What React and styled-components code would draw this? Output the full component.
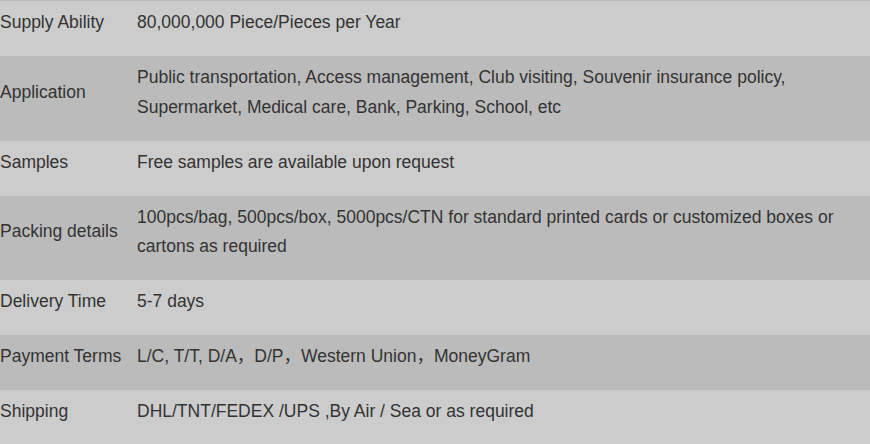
import styled, { createGlobalStyle } from 'styled-components';

const specs = [
  { label: 'Supply Ability', value: '80,000,000 Piece/Pieces per Year' },
  {
    label: 'Application',
    value:
      'Public transportation, Access management, Club visiting, Souvenir insurance policy, Supermarket, Medical care, Bank, Parking, School, etc',
  },
  { label: 'Samples', value: 'Free samples are available upon request' },
  {
    label: 'Packing details',
    value:
      '100pcs/bag, 500pcs/box, 5000pcs/CTN for standard printed cards or customized boxes or cartons as required',
  },
  { label: 'Delivery Time', value: '5-7 days' },
  { label: 'Payment Terms', value: 'L/C, T/T, D/A，D/P，Western Union，MoneyGram' },
  { label: 'Shipping', value: 'DHL/TNT/FEDEX /UPS ,By Air / Sea or as required' },
];

const App = () => {
  return (
    <>
      <GlobalStyle />
      <Table>
        <tbody>
          {specs.map((spec, i) => (
            <Row key={spec.label} $dark={i % 2 === 1}>
              <Label>{spec.label}</Label>
              <Value>{spec.value}</Value>
            </Row>
          ))}
        </tbody>
      </Table>
    </>
  );
};

export default App;

const GlobalStyle = createGlobalStyle`
  body {
    margin: 0;
    background: #cccccc;
  }
`;

const Table = styled.table`
  width: 870px;
  border-collapse: separate;
  border-spacing: 0;
  border-top: 1px solid #bbbbbb;
  font-family: "Liberation Sans", Arial, "Noto Sans CJK SC", sans-serif;
  font-size: 17.5px;
  line-height: 29.5px;
  color: #333333;
`;

const Row = styled.tr`
  background: ${(p) => (p.$dark ? '#bbbbbb' : '#cccccc')};
`;

const Label = styled.td`
  width: 137px;
  padding: 7px 0 18.5px 0;
  vertical-align: middle;
  white-space: nowrap;
`;

const Value = styled.td`
  padding: 7px 0 18.5px 0;
  vertical-align: middle;
`;
